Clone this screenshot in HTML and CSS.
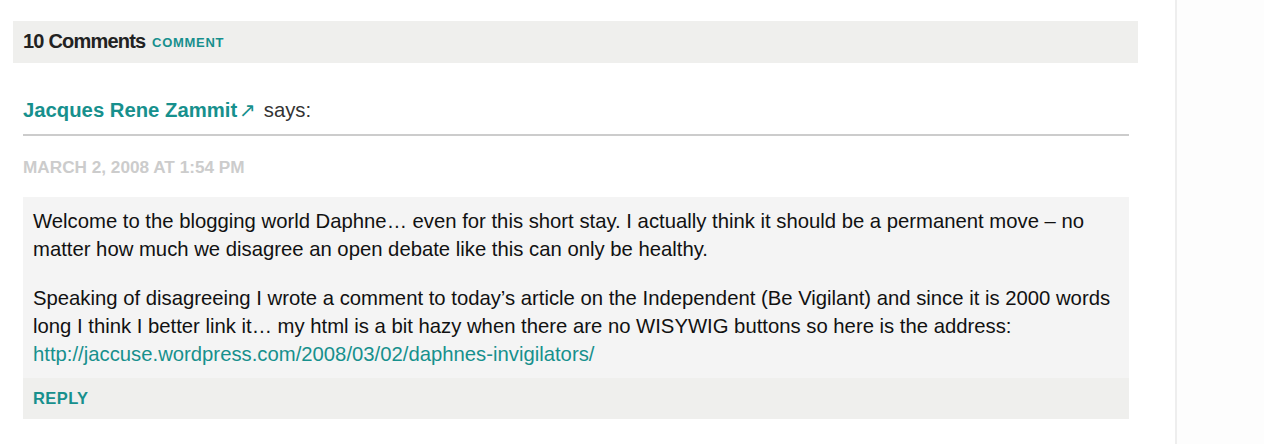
FILE: index.html
```html
<!DOCTYPE html>
<html lang="en">
<head>
  <meta charset="UTF-8" />
  <meta name="viewport" content="width=device-width, initial-scale=1.0" />
  <title>Comments</title>
  <link rel="stylesheet" href="styles.css">
</head>
<body>
  <div class="page">
    <div class="content">
      <h3 class="comments-title">10 Comments <a href="#respond" class="comment-link">Comment</a></h3>

      <ol class="comment-list">
        <li class="comment">
          <div class="comment-author">
            <a href="#" class="author-name">Jacques Rene Zammit</a><span class="ext">↗</span>
            <span class="says">says:</span>
          </div>
          <div class="comment-date">March 2, 2008 at 1:54 pm</div>
          <div class="comment-body">
            <p>Welcome to the blogging world Daphne… even for this short stay. I actually think it should be a permanent move – no matter how much we disagree an open debate like this can only be healthy.</p>
            <p>Speaking of disagreeing I wrote a comment to today’s article on the Independent (Be Vigilant) and since it is 2000 words long I think I better link it… my html is a bit hazy when there are no WISYWIG buttons so here is the address: <a href="#">http://jaccuse.wordpress.com/2008/03/02/daphnes-invigilators/</a></p>
          </div>
          <div class="reply"><a href="#">Reply</a></div>
        </li>
      </ol>
    </div>
    <div class="sidebar"></div>
  </div>
</body>
</html>
```

FILE: styles.css
```css
body {
  margin: 0;
  font-family: "Liberation Sans", Arial, sans-serif;
  color: #111;
  background: #fff;
}
a {
  color: #17908d;
  text-decoration: none;
}
.page {
  display: flex;
  min-height: 444px;
}
.content {
  width: 1125px;
  margin-left: 13px;
  padding-top: 21px;
}
.sidebar {
  margin-left: 37px;
  flex: 1;
  border-left: 2px solid #eee;
  background: #fdfdfd;
}
.comments-title {
  margin: 0;
  background: #efefed;
  padding: 10px;
  font-size: 20px;
  line-height: 21px;
  letter-spacing: -0.8px;
  color: #222;
}
.comment-link {
  font-size: 13px;
  letter-spacing: 0.7px;
  text-transform: uppercase;
  vertical-align: 1px;
  margin-left: 2px;
}
.comment-list {
  list-style: none;
  margin: 34px 9px 0 10px;
  padding: 0;
}
.comment-author {
  font-size: 20.3px;
  line-height: 26px;
  padding-bottom: 11px;
  border-bottom: 2px solid #ccc;
}
.author-name {
  font-weight: bold;
}
.ext {
  color: #17908d;
  font-size: 20px;
  margin-left: 2px;
  margin-right: 2px;
}
.says {
  color: #333;
}
.comment-date {
  margin-top: 21px;
  font-size: 17.2px;
  line-height: 20px;
  font-weight: bold;
  color: #ccc;
  text-transform: uppercase;
}
.comment-body {
  margin-top: 20px;
  background: #f4f4f4;
  padding: 10px;
  font-size: 20.3px;
  line-height: 28px;
}
.comment-body p {
  margin: 0 0 21px;
}
.comment-body p:last-child {
  margin-bottom: 0;
}
.reply {
  background: #efefed;
  padding: 10px;
  font-size: 16.5px;
  line-height: 21px;
  letter-spacing: 0.4px;
  font-weight: bold;
  text-transform: uppercase;
}
```
